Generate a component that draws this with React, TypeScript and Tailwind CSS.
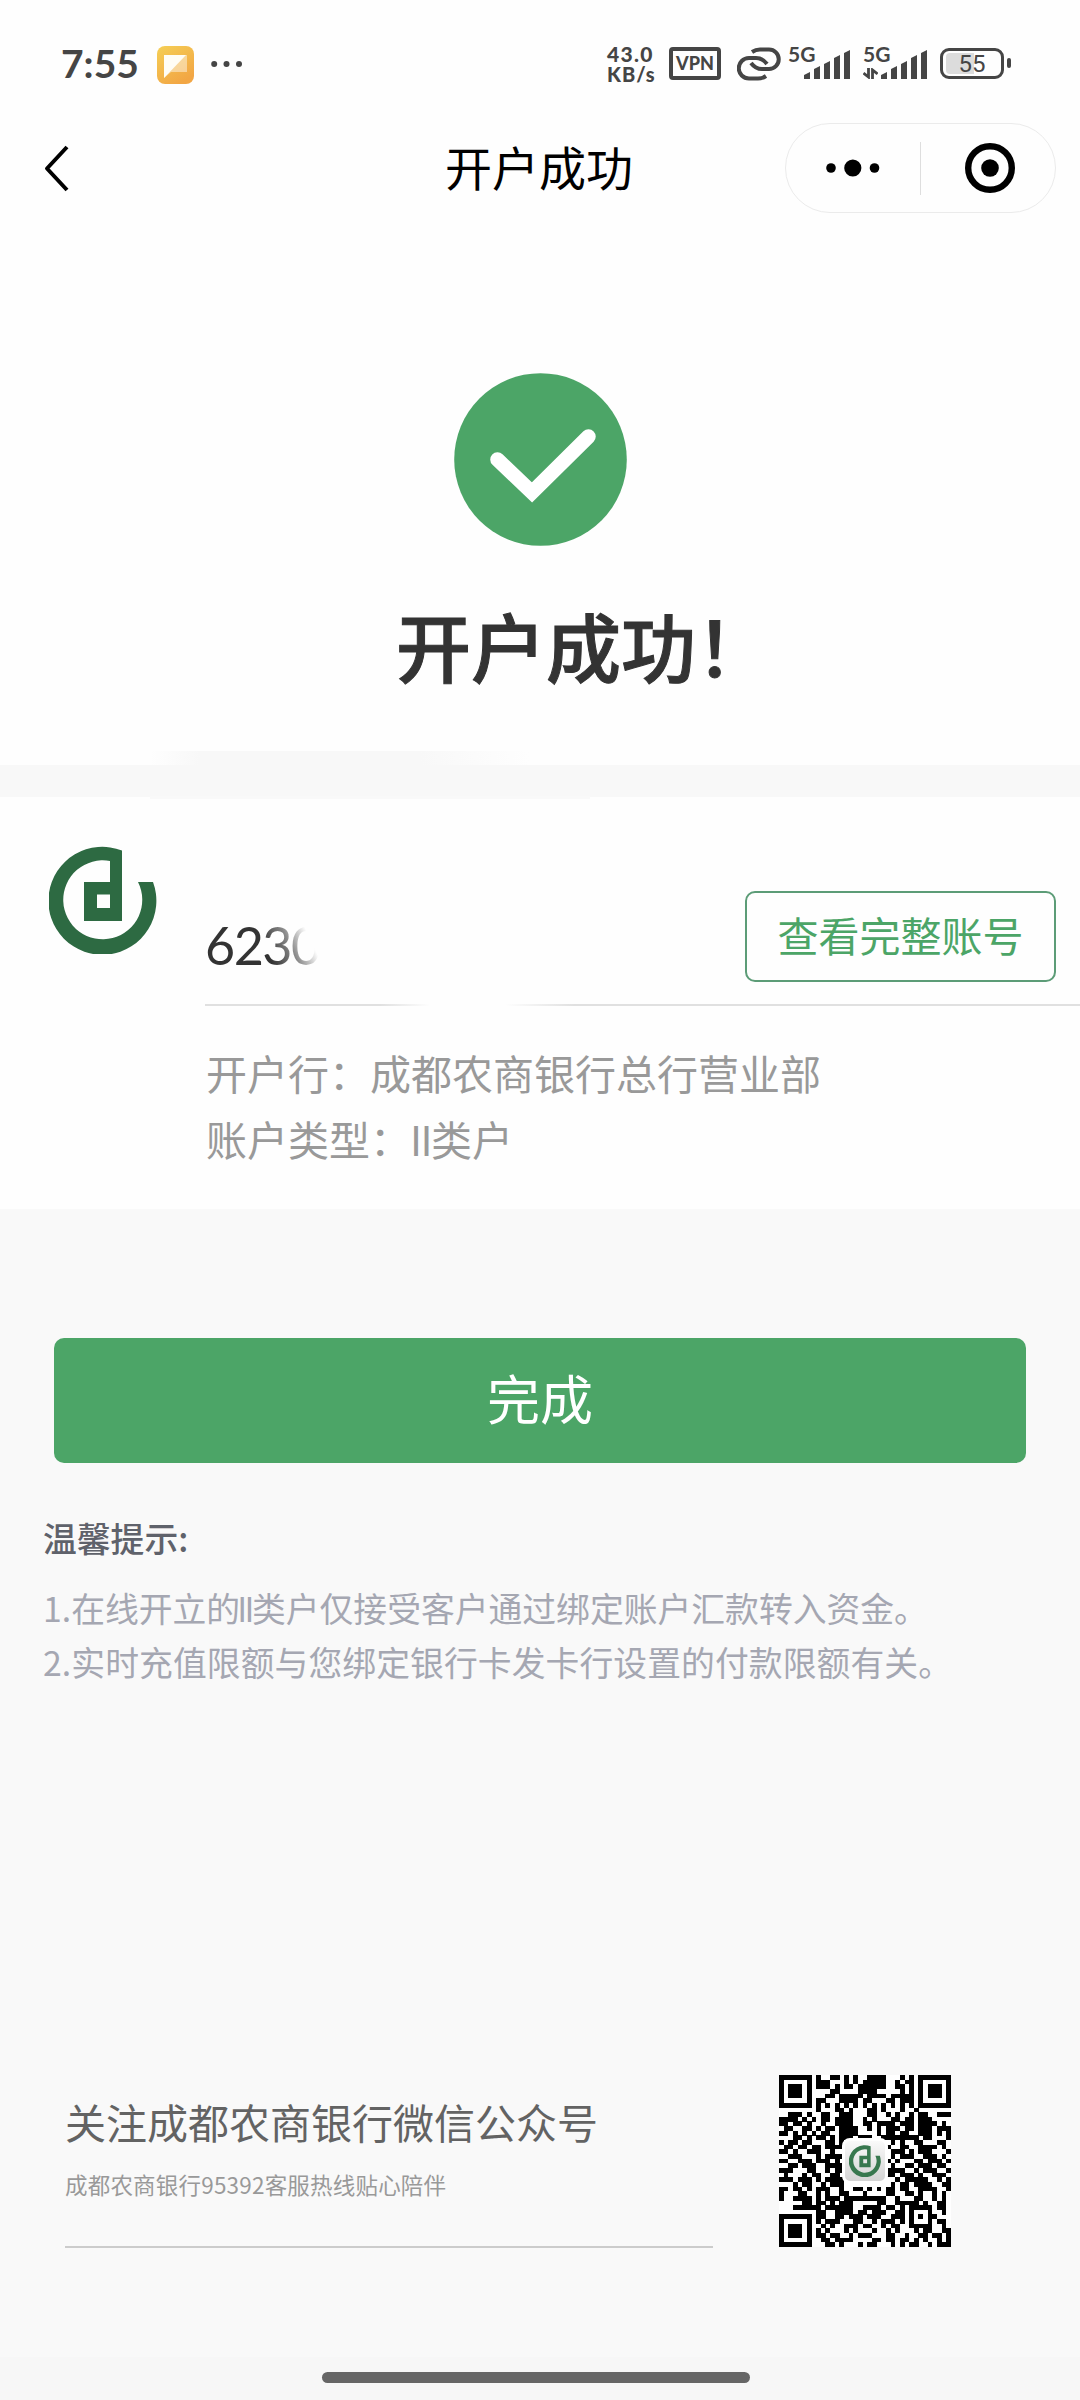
const QR_ROWS = [
  '1111111' + '01001101010011110001010' + '1111111',
  '1000001' + '01110001010111110010110' + '1000001',
  '1011101' + '01110101101111110011010' + '1011101',
  '1011101' + '00001100001111000001010' + '1011101',
  '1011101' + '00011011111011110111110' + '1011101',
  '1000001' + '01100011110110001101110' + '1000001',
  '1111111' + '01010101010101010101010' + '1111111',
  '0000000010001101000110100010010000000',
  '0011101001100111000110010100101100111',
  '1111010101101111001010001101101110000',
  '1101101001001111001101111011101111010',
  '0110011010110111100101011101101110111',
  '1101010101100111100001011011001110101',
  '0001101011010111011100111111110110001',
  '1011011000110100000000001010011000110',
  '0110110110111100000000010011001111010',
  '1101001110010000000000001110101110001',
  '0011100010111100000000001011100111010',
  '1100111011101000000000010100011011101',
  '0011011100111100000000001001101110110',
  '1110001100101100000000011110010111001',
  '0100010110011000000000011011101001110',
  '1110111010111100000000000101111100101',
  '0001011001011100000000001011011110011',
  '1101101011100100110101011011001111001',
  '1000110010100110001000011001101001010',
  '1001111010111011111111100100011001010',
  '0000011011010111000001100111110100110',
  '0001111110111111001111011010111110110',
  '0000000011001111011011100110100010010',
  '1111111011001101110111001110101011000',
  '1000001010111000110010111010100010110',
  '1011101001010011101100101100111110010',
  '1011101010100010100010010100010110011',
  '1011101011011001011100011001001101101',
  '1000001001101111000011011011010100101',
  '1111111000110100010110001010110010111',
];

function BankLogo({ className, color = '#2d6a42' }: { className?: string; color?: string }) {
  return (
    <svg className={className} viewBox="0 0 108 108" fill="none">
      <path
        d="M73 4.5A54 54 0 1 0 104 36H89A39.5 39.5 0 1 1 61 15V36H35V75H73ZM48 48.500H61V62H48Z"
        fill={color}
        fillRule="evenodd"
      />
    </svg>
  );
}

function SignalBars({ className }: { className?: string }) {
  return (
    <svg className={className} viewBox="0 0 46 30" fill="#454545">
      <path d="M0 29V25L6 22V29ZM10 29V19L16 16V29ZM20 29V14L26 11V29ZM30 29V8L36 5V29ZM40 29V3L46 0V29Z" />
    </svg>
  );
}

function StatusBar() {
  return (
    <div className="flex h-[112px] items-start pl-[61px] pt-[44px] font-['Lato'] text-[#454545]">
      <div className="w-[96px] text-[39px] leading-[39px] font-bold">7:55</div>
      <svg className="mt-[2px] h-[38px] w-[37px]" viewBox="0 0 37 38">
        <defs>
          <linearGradient id="note" x1="0" y1="0" x2="0.6" y2="1">
            <stop offset="0" stopColor="#f5cf55" />
            <stop offset="1" stopColor="#f2a644" />
          </linearGradient>
        </defs>
        <rect width="37" height="38" rx="8" fill="url(#note)" />
        <path d="M7 9H30V26H14L7 32Z" fill="#fff" opacity="0.45" />
        <path d="M7 9H29L7 32Z" fill="#fffdf5" />
      </svg>
      <svg className="mt-[16px] ml-[17px] h-[8px] w-[32px]" viewBox="0 0 32 8" fill="#454545">
        <circle cx="3.200" cy="4" r="3" />
        <circle cx="15.500" cy="4" r="3" />
        <circle cx="28" cy="4" r="3" />
      </svg>

      <div className="-mt-px ml-[364px] w-[62px] text-[21px] leading-[21px] font-black whitespace-nowrap">
        <div className="tracking-[1.3px]">43.0</div>
        <div className="text-[20px] tracking-[1px]">KB/s</div>
      </div>
      <div className="mt-[3px] flex h-[33px] w-[52px] items-center justify-center rounded-[4px] border-4 border-[#454545] text-[18px] font-black">
        VPN
      </div>
      <svg
        className="mt-[3px] ml-[16px] h-[34px] w-[44px]"
        viewBox="0 0 44 34"
        fill="none"
        stroke="#454545"
        strokeWidth="4"
      >
        <path d="M15 5C18 3 20 2.500 23 2.500H32A9.750 9.750 0 0 1 32 22H25C20 22 17 20 14 16" />
        <path d="M29 29C26 31 24 31.500 21 31.500H12A10.250 10.250 0 0 1 12 11H19C24 11 27 13 30 17" />
      </svg>
      <div className="relative ml-[7px] h-[36px] w-[62px]">
        <div className="text-[21px] leading-[20px] font-bold">5G</div>
        <SignalBars className="absolute top-[6px] left-[16px] h-[30px] w-[46px]" />
      </div>
      <div className="relative ml-[13px] h-[36px] w-[64px]">
        <div className="text-[21px] leading-[20px] font-bold">5G</div>
        <svg
          className="absolute top-[24px] left-0 h-[11px] w-[15px]"
          viewBox="0 0 15 11"
          fill="none"
          stroke="#454545"
          strokeWidth="2.800"
        >
          <path d="M5.500 0V9L0.500 5M9.500 11V2L14.500 6" />
        </svg>
        <SignalBars className="absolute top-[6px] left-[18px] h-[30px] w-[46px]" />
      </div>
      <div className="relative mt-[4px] ml-[13px] h-[31px] w-[64px] rounded-[9px] border-[3px] border-[#454545]">
        <div className="absolute top-[2px] left-[3px] h-[21px] w-[28px] rounded-l-[4px] bg-[#dcdcdc]" />
        <div className="relative text-center font-['Roboto'] text-[24px] leading-[26px]">55</div>
      </div>
      <div className="mt-[14px] ml-[3px] h-[10px] w-[4px] rounded-[2px] bg-[#454545]" />
    </div>
  );
}

function NavBar() {
  return (
    <div className="flex h-[112px] items-start pt-[11px] pr-[24px] pl-[44px]">
      <svg
        className="mt-[22px] h-[47px] w-[26px]"
        viewBox="0 0 26 47"
        fill="none"
        stroke="#000"
        strokeWidth="4"
        strokeLinejoin="round"
      >
        <path d="M23 2L3 23.500L23 45" />
      </svg>
      <h1 className="ml-[375px] text-[47px] leading-[85px] font-normal whitespace-nowrap text-black">开户成功</h1>
      <div className="ml-auto flex h-[90px] w-[271px] items-center rounded-full border border-[#ebebeb]">
        <svg className="ml-[38px] h-[18px] w-[58px]" viewBox="0 0 58 18">
          <circle cx="7" cy="9" r="4.800" />
          <circle cx="28.800" cy="9" r="8.600" />
          <circle cx="50.500" cy="9" r="4.800" />
        </svg>
        <div className="ml-[38px] h-[53px] w-px bg-[#dedede]" />
        <svg className="ml-[44px] h-[50px] w-[50px]" viewBox="0 0 50 50">
          <circle cx="25" cy="25" r="21.800" fill="none" stroke="#000" strokeWidth="6.400" />
          <circle cx="25" cy="25" r="8.800" />
        </svg>
      </div>
    </div>
  );
}

function QrCode() {
  return (
    <div className="relative h-[172px] w-[172px]">
      <svg className="h-[172px] w-[172px]" viewBox="0 0 37 37" shapeRendering="crispEdges">
        <rect width="37" height="37" fill="#fff" />
        {QR_ROWS.map((row, y) =>
          row.split('').map((cell, x) =>
            cell === '1' ? <rect key={`${x}-${y}`} x={x} y={y} width="1.02" height="1.02" /> : null
          )
        )}
      </svg>
      <div className="absolute top-[63px] left-[63px] flex h-[46px] w-[46px] items-center justify-center rounded-[8px] border-[3px] border-white bg-linear-to-b from-[#fafafa] to-[#d4d4d4]">
        <BankLogo className="h-[32px] w-[32px] shrink-0" color="#38784f" />
      </div>
    </div>
  );
}

export default function App() {
  return (
    <div className="flex h-[2400px] w-[1080px] flex-col overflow-hidden bg-[#f9f9f9] font-['Noto_Sans_CJK_SC',sans-serif]">
      <div className="h-[765px] shrink-0 bg-[#fefefe]">
        <StatusBar />
        <NavBar />
        <svg className="mx-auto mt-[149px] h-[173px] w-[173px]" viewBox="0 0 173 173" fill="none">
          <circle cx="86.500" cy="86.500" r="86.300" fill="#4ca567" />
          <path d="M43.500 86.500L78 119.500L134.500 63.500" stroke="#fff" strokeWidth="14.500" strokeLinecap="round" />
        </svg>
        <h2 className="mt-[45px] pl-[396px] text-[75px] leading-[108px] font-medium whitespace-nowrap text-[#333] [-webkit-text-stroke:1px_#333]">
          开户成功！
        </h2>
      </div>

      <div className="relative h-[32px] shrink-0 bg-[#f8f8f8]">
        <div className="absolute -top-[14px] left-[150px] flex h-[15px] w-[380px]">
          <div className="w-[50px] bg-linear-to-r from-[#f8f8f8]/0 to-[#f8f8f8]" />
          <div className="w-[220px] bg-[#f8f8f8]" />
          <div className="flex-1 bg-linear-to-r from-[#f8f8f8] to-[#f8f8f8]/0" />
        </div>
        <div className="absolute top-[31px] left-[150px] z-10 h-[3px] w-[440px] bg-[#f9f9f9]" />
      </div>

      <section className="flex h-[412px] shrink-0 bg-[#fefefe] pl-[49px]">
        <BankLogo className="mt-[49px] h-[108px] w-[108px]" />
        <div className="ml-[48px] flex-1">
          <div className="flex h-[207px] justify-between pr-[24px]">
            <div className="mt-[117px] h-[62px] bg-[linear-gradient(65deg,#333_50%,#888_68%,#fefefe_84%)] bg-clip-text pr-[2px] font-['Lato'] text-[52px] leading-[62px] tracking-[-1.5px] text-transparent">
              6230
            </div>
            <button className="mt-[94px] h-[91px] w-[311px] rounded-[10px] border-2 border-[#5c9c77] pb-[5px] text-[41px] leading-none text-[#4ca567]">
              查看完整账号
            </button>
          </div>
          <div className="flex h-[2px]">
            <div className="w-[175px] bg-[#e0e0e0]" />
            <div className="w-[50px] bg-linear-to-r from-[#e0e0e0] to-[#fefefe]" />
            <div className="w-[75px]" />
            <div className="w-[70px] bg-linear-to-r from-[#fefefe] to-[#e0e0e0]" />
            <div className="flex-1 bg-[#e0e0e0]" />
          </div>
          <div className="mt-[33px] ml-px text-[41px] leading-[66px] text-[#999]">
            <p>开户行：成都农商银行总行营业部</p>
            <p>
              账户类型：<span className="-ml-px tracking-[-1.5px]">II</span>类户
            </p>
          </div>
        </div>
      </section>

      <button className="mx-[54px] mt-[129px] h-[125px] shrink-0 rounded-[10px] bg-[#4ca567] pb-[7px] text-[53px] leading-none text-white">
        完成
      </button>

      <div className="mt-[48px] px-[43px] text-[33.800px] leading-[54px] whitespace-nowrap text-[#a5a7b2]">
        <p className="mb-[16px] font-medium text-[#5f626b]">温馨提示:</p>
        <p>
          1.在线开立的<span className="-ml-[3px] tracking-[-2.5px]">II</span>类户仅接受客户通过绑定账户汇款转入资金。
        </p>
        <p className="tracking-[0.08px]">2.实时充值限额与您绑定银行卡发卡行设置的付款限额有关。</p>
      </div>

      <footer className="mt-[386px] flex h-[174px] shrink-0 pl-[65px]">
        <div className="h-[173px] w-[648px] border-b-2 border-[#ccc] pt-[16px]">
          <p className="text-[41px] leading-[60px] text-[#636363]">关注成都农商银行微信公众号</p>
          <p className="mt-[16px] text-[22.500px] leading-[34px] tracking-[0.2px] text-[#999]">
            成都农商银行95392客服热线贴心陪伴
          </p>
        </div>
        <div className="ml-[66px]">
          <QrCode />
        </div>
      </footer>

      <div className="mt-auto flex h-[43px] shrink-0 bg-[#f7f7f7] pt-[15px] pl-[322px]">
        <div className="h-[11px] w-[428px] rounded-full bg-[#666]" />
      </div>
    </div>
  );
}
